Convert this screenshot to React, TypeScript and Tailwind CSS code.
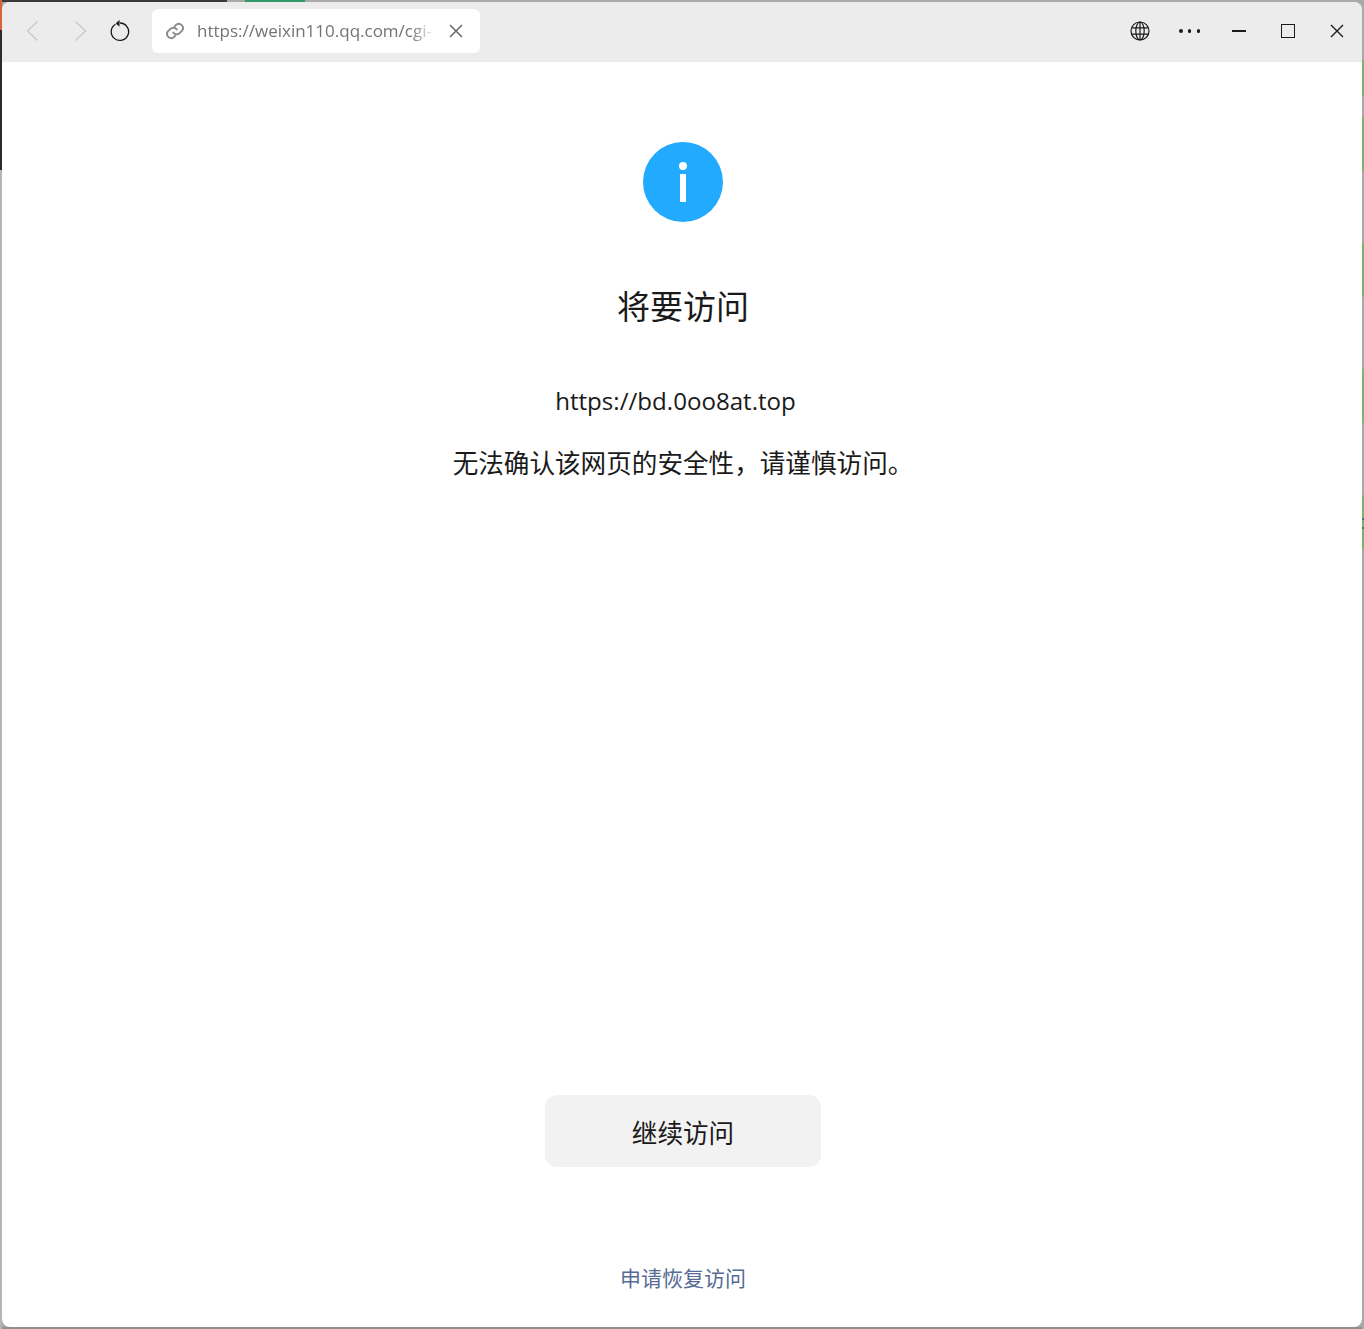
const font = "font-['Open_Sans','Noto_Sans_CJK_SC',sans-serif]";

function Back({ className }: { className: string }) {
  return (
    <svg width="20" height="22" viewBox="0 0 20 22" fill="none" stroke="currentColor" strokeWidth="1.4" className={className}>
      <path d="M15.5 1.5 5.5 11l10 9.5" />
    </svg>
  );
}

function Toolbar() {
  return (
    <div className="flex h-[60px] shrink-0 items-center bg-[#ececec] pb-[2px]">
      <div className="ml-[20px] flex w-[20px] justify-center text-[#c9c9c9]">
        <Back className="" />
      </div>
      <div className="ml-[29px] flex w-[20px] justify-center text-[#c9c9c9]">
        <Back className="rotate-180" />
      </div>
      {/* reload */}
      <svg width="22" height="22" viewBox="0 0 22 22" fill="none" stroke="#1a1a1a" strokeWidth="1.3" className="ml-[18px]">
        <path d="M6.5 4.2A8.7 8.7 0 1 0 11 3" />
        <path d="M10.6 0.2 7 3.4l3.4 2.8" fill="#1a1a1a" strokeWidth="0.6" />
      </svg>
      <div className="ml-[21px] flex h-[44px] w-[328px] items-center rounded-[6px] bg-white">
        <svg width="20" height="20" viewBox="0 0 24 24" fill="none" stroke="#8c8c8c" strokeWidth="2.4" strokeLinecap="round" className="ml-[13px]">
          <path d="M10 14a5 5 0 0 0 7.5.5l3-3a5 5 0 0 0-7-7l-1.7 1.7" />
          <path d="M14 10a5 5 0 0 0-7.5-.5l-3 3a5 5 0 0 0 7 7l1.7-1.7" />
        </svg>
        <div className="ml-[12px] w-[238px] whitespace-nowrap text-[17px] leading-[24px] text-[#737373] [mask-image:linear-gradient(to_right,black_90%,transparent_100%)]">
          https://weixin110.qq.com/cgi-
        </div>
        <svg width="14" height="14" viewBox="0 0 14 14" fill="none" stroke="#666666" strokeWidth="1.5" className="ml-[14px]">
          <path d="M1 1l12 12M13 1 1 13" />
        </svg>
      </div>
      <div className="flex-1" />
      {/* globe */}
      <svg width="20" height="20" viewBox="0 0 20 20" fill="none" stroke="#1a1a1a" strokeWidth="1.2" className="mr-[29px]">
        <circle cx="10" cy="10" r="9" />
        <ellipse cx="10" cy="10" rx="4.2" ry="9" />
        <path d="M1.6 6.8h16.8M1.6 13.2h16.8M10 1v18" />
      </svg>
      <div className="mr-[32px] flex w-[21px] justify-between">
        <span className="size-[3.5px] rounded-full bg-[#1a1a1a]" />
        <span className="size-[3.5px] rounded-full bg-[#1a1a1a]" />
        <span className="size-[3.5px] rounded-full bg-[#1a1a1a]" />
      </div>
      <div className="mr-[35px] h-[1.5px] w-[14px] bg-[#1a1a1a]" />
      <div className="mr-[35px] size-[14px] border-[1.5px] border-[#1a1a1a]" />
      <svg width="14" height="14" viewBox="0 0 14 14" fill="none" stroke="#1a1a1a" strokeWidth="1.4" className="mr-[18px]">
        <path d="M1 1l12 12M13 1 1 13" />
      </svg>
    </div>
  );
}

function InfoIcon() {
  return (
    <div className="flex size-[80px] flex-col items-center justify-center rounded-full bg-[#22aaff]">
      <span className="size-[8px] rounded-full bg-white" />
      <span className="mt-[4px] h-[28px] w-[6px] bg-white" />
    </div>
  );
}

export default function App() {
  return (
    <div className={`flex h-[1329px] w-[1364px] overflow-hidden bg-[#a9a9a9] ${font}`}>
      {/* desktop peeking out on the left */}
      <div className="flex w-[2px] shrink-0 flex-col">
        <div className="h-[30px] bg-[#d9623a]" />
        <div className="h-[140px] bg-[#2c2c2c]" />
        <div className="flex-1 bg-[#b5b5b5]" />
      </div>
      <div className="flex w-[1360px] flex-col">
        <div className="flex h-[2px] shrink-0">
          <div className="w-[225px] bg-[#3a3a3a]" />
          <div className="w-[18px] bg-[#a8a8a8]" />
          <div className="w-[60px] bg-[#359a6a]" />
          <div className="flex-1 bg-[#a9a9a9]" />
        </div>
        <div className="flex min-h-0 flex-1 flex-col overflow-hidden rounded-[8px] bg-white">
          <Toolbar />
          <main className="flex flex-1 flex-col items-center pl-[2px] text-[#1a1a1a]">
            <div className="mt-[80px]">
              <InfoIcon />
            </div>
            <h1 className="mt-[62px] text-[33px] leading-[46px]">将要访问</h1>
            <p className="mr-[15px] mt-[53px] text-[24.1px] leading-[36px]">https://bd.0oo8at.top</p>
            <p className="mt-[27px] text-[25.6px] leading-[36px]">无法确认该网页的安全性，请谨慎访问。</p>
            <div className="flex-1" />
            <button className="flex h-[72px] w-[276px] items-center justify-center rounded-[12px] bg-[#f2f2f2] pt-[6px] text-[25.6px]">
              继续访问
            </button>
            <a className="mb-[34px] mt-[96px] text-[21px] leading-[30px] text-[#576b95]">申请恢复访问</a>
          </main>
        </div>
        <div className="h-[2px] shrink-0 bg-[#8f8f8f]" />
      </div>
      {/* right edge, window behind */}
      <div className="flex w-[2px] shrink-0 flex-col">
        <div className="h-[60px] bg-[#a9a9a9]" />
        <div className="h-[36px] bg-[#7cb26a]" />
        <div className="h-[21px] bg-[#a9a9a9]" />
        <div className="h-[54px] bg-[#7cb26a]" />
        <div className="h-[72px] bg-[#a9a9a9]" />
        <div className="h-[54px] bg-[#7cb26a]" />
        <div className="h-[72px] bg-[#a9a9a9]" />
        <div className="h-[54px] bg-[#7cb26a]" />
        <div className="h-[72px] bg-[#a9a9a9]" />
        <div className="h-[23px] bg-[#7cb26a]" />
        <div className="h-[2px] bg-[#5a6a7a]" />
        <div className="h-[7px] bg-[#7cb26a]" />
        <div className="h-[2px] bg-[#5a6a7a]" />
        <div className="h-[20px] bg-[#7cb26a]" />
        <div className="flex-1 bg-[#a9a9a9]" />
      </div>
    </div>
  );
}
